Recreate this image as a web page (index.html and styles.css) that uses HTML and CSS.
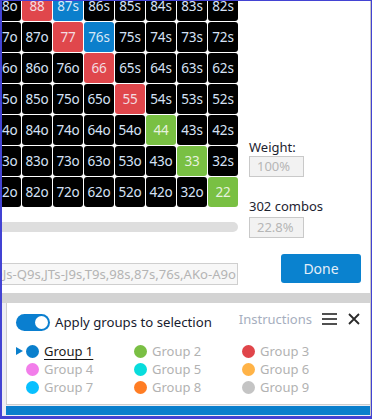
FILE: index.html
```html
<!DOCTYPE html>
<html>
<head>
<meta charset="utf-8">
<link rel="stylesheet" href="styles.css">
</head>
<body>
<div class="window">
  <div class="frame">
    <div class="top">
      <div class="left">
        <div class="grid-view">
          <div class="grid">
            <div class="cell">98o</div><div class="cell red">88</div><div class="cell blue">87s</div><div class="cell">86s</div><div class="cell">85s</div><div class="cell">84s</div><div class="cell">83s</div><div class="cell">82s</div>
            <div class="cell">97o</div><div class="cell">87o</div><div class="cell red">77</div><div class="cell blue">76s</div><div class="cell">75s</div><div class="cell">74s</div><div class="cell">73s</div><div class="cell">72s</div>
            <div class="cell">96o</div><div class="cell">86o</div><div class="cell">76o</div><div class="cell red">66</div><div class="cell">65s</div><div class="cell">64s</div><div class="cell">63s</div><div class="cell">62s</div>
            <div class="cell">95o</div><div class="cell">85o</div><div class="cell">75o</div><div class="cell">65o</div><div class="cell red">55</div><div class="cell">54s</div><div class="cell">53s</div><div class="cell">52s</div>
            <div class="cell">94o</div><div class="cell">84o</div><div class="cell">74o</div><div class="cell">64o</div><div class="cell">54o</div><div class="cell green">44</div><div class="cell">43s</div><div class="cell">42s</div>
            <div class="cell">93o</div><div class="cell">83o</div><div class="cell">73o</div><div class="cell">63o</div><div class="cell">53o</div><div class="cell">43o</div><div class="cell green">33</div><div class="cell">32s</div>
            <div class="cell">92o</div><div class="cell">82o</div><div class="cell">72o</div><div class="cell">62o</div><div class="cell">52o</div><div class="cell">42o</div><div class="cell">32o</div><div class="cell green">22</div>
          </div>
        </div>
        <div class="scroll-track"></div>
        <div class="range-input"><span>AA-22,AKs-A9s,KQs-K9s,QJs-Q9s,JTs-J9s,T9s,98s,87s,76s,AKo-A9o</span></div>
      </div>
      <div class="right">
        <div class="label">Weight:</div>
        <div class="box">100%</div>
        <div class="label combos">302 combos</div>
        <div class="box">22.8%</div>
        <button class="done">Done</button>
      </div>
    </div>
    <div class="divider"></div>
    <div class="bottom">
      <div class="panel">
        <div class="panel-head">
          <div class="apply">
            <span class="toggle"><span class="knob"></span></span>
            <span class="apply-text">Apply groups to selection</span>
          </div>
          <div class="tools">
            <span class="instructions">Instructions</span>
            <svg class="menu-icon" width="15" height="14" viewBox="0 0 15 14"><rect x="0" y="1" width="15" height="2" fill="#505050"/><rect x="0" y="6" width="15" height="2" fill="#505050"/><rect x="0" y="11" width="15" height="2" fill="#505050"/></svg>
            <svg class="close-icon" width="12" height="12" viewBox="0 0 12 12"><path d="M1 1 L11 11 M11 1 L1 11" stroke="#2a2a2a" stroke-width="1.8" fill="none"/></svg>
          </div>
        </div>
        <div class="groups">
          <div class="group active"><span class="marker"></span><span class="dot" style="background:#0a7fcc"></span><span class="gname">Group 1</span></div>
          <div class="group"><span class="marker"></span><span class="dot" style="background:#7abf44"></span><span class="gname">Group 2</span></div>
          <div class="group"><span class="marker"></span><span class="dot" style="background:#e0454a"></span><span class="gname">Group 3</span></div>
          <div class="group"><span class="marker"></span><span class="dot" style="background:#f27eea"></span><span class="gname">Group 4</span></div>
          <div class="group"><span class="marker"></span><span class="dot" style="background:#08dcdc"></span><span class="gname">Group 5</span></div>
          <div class="group"><span class="marker"></span><span class="dot" style="background:#ffb347"></span><span class="gname">Group 6</span></div>
          <div class="group"><span class="marker"></span><span class="dot" style="background:#08c0ff"></span><span class="gname">Group 7</span></div>
          <div class="group"><span class="marker"></span><span class="dot" style="background:#ff7d24"></span><span class="gname">Group 8</span></div>
          <div class="group"><span class="marker"></span><span class="dot" style="background:#c4c4c4"></span><span class="gname">Group 9</span></div>
        </div>
      </div>
      <div class="bluebar"></div>
    </div>
  </div>
</div>
</body>
</html>
```

FILE: styles.css
```css
* { box-sizing: border-box; }
html, body { margin: 0; padding: 0; background: #fff; }
body { font-family: "Noto Sans", "Open Sans", sans-serif; }

.window {
  width: 372px;
  height: 419px;
  border-style: solid;
  border-color: #4343d3;
  border-width: 1px 1px 3px 2px;
  overflow: hidden;
}
.frame {
  height: 100%;
  border-right: 1px solid #c6c6c6;
  display: flex;
  flex-direction: column;
}

.top {
  height: 292px;
  display: flex;
}
.left {
  width: 236px;
  display: flex;
  flex-direction: column;
}
.grid-view {
  height: 206px;
  overflow: hidden;
}
.grid {
  margin: -10px 0 0 -11px;
  display: grid;
  grid-template-columns: repeat(8, 30px);
  grid-auto-rows: 30px;
  gap: 1px;
}
.cell {
  background: #000;
  border-radius: 3px;
  color: #d6e2f6;
  font-size: 13.5px;
  display: flex;
  align-items: center;
  justify-content: center;
  letter-spacing: -0.2px;
}
.cell.red { background: #e0474c; color: #f4dde0; }
.cell.blue { background: #0b7fcc; color: #d8e8f6; }
.cell.green { background: #79c043; color: #e6f2de; }

.scroll-track {
  margin-top: 15px;
  height: 10px;
  background: #dedede;
  border-radius: 0 5px 5px 0;
}
.range-input {
  margin-top: 31px;
  height: 22px;
  border: 1px solid #cfcfcf;
  border-left: none;
  background: #f7f7f7;
  display: flex;
  justify-content: flex-end;
  align-items: center;
  overflow: hidden;
  white-space: nowrap;
  padding-right: 1px;
  color: #b4b4b4;
  font-size: 13.1px;
}

.right {
  flex: 1;
  display: flex;
  flex-direction: column;
  align-items: flex-start;
  padding: 138px 9px 0 11px;
}
.label {
  font-size: 13px;
  line-height: 17px;
  height: 17px;
  color: #1d2330;
}
.label.combos { margin-top: 21px; }
.box {
  width: 55px;
  height: 21px;
  border: 1px solid #c9c9c9;
  background: #f2f2f2;
  color: #b6b6b6;
  font-size: 13px;
  line-height: 19px;
  padding-left: 7px;
}
.label.combos + .box { margin-top: 2px; }
.done {
  margin-top: 16px;
  align-self: flex-end;
  width: 80px;
  height: 29px;
  border: none;
  border-radius: 3px;
  background: #0a82cf;
  color: #e4eef8;
  font-family: "Noto Sans", "Open Sans", sans-serif;
  font-size: 14px;
  padding: 0;
}

.divider {
  height: 10px;
  background: #d3d3d3;
}
.bottom {
  flex: 1;
  background: #ededf3;
  display: flex;
  flex-direction: column;
}
.panel {
  margin-left: 4px;
  height: 102px;
  background: #fff;
  border-left: 1px solid #cdcdcd;
  border-bottom: 1px solid #cdcdcd;
  padding: 8px 10px 0 9px;
}
.panel-head {
  display: flex;
  justify-content: space-between;
  align-items: flex-start;
}
.apply {
  display: flex;
  align-items: center;
  margin-top: 3px;
  gap: 5px;
}
.toggle {
  width: 34px;
  height: 17px;
  border-radius: 9px;
  background: #0a7fd0;
  display: flex;
  align-items: center;
  justify-content: flex-end;
  padding-right: 2px;
}
.knob {
  width: 13px;
  height: 13px;
  border-radius: 50%;
  background: #fff;
}
.apply-text {
  font-size: 13.2px;
  color: #18202e;
  line-height: 17px;
}
.tools {
  display: flex;
  align-items: center;
  height: 18px;
  margin-top: -1px;
}
.instructions {
  font-size: 13px;
  color: #a6aebe;
  line-height: 18px;
}
.menu-icon { margin-left: 10px; }
.close-icon { margin-left: 11px; }

.groups {
  margin-top: 11px;
  display: grid;
  grid-template-columns: 108px 108px 108px;
  grid-auto-rows: 18px;
}
.group {
  display: flex;
  align-items: center;
}
.marker {
  width: 10px;
  height: 9px;
  flex: none;
}
.group.active .marker {
  width: 0;
  height: 0;
  border-top: 4.5px solid transparent;
  border-bottom: 4.5px solid transparent;
  border-left: 7px solid #0a7fcc;
  margin-right: 3px;
}
.dot {
  width: 13px;
  height: 13px;
  border-radius: 50%;
  flex: none;
}
.gname {
  margin-left: 5px;
  font-size: 13px;
  color: #b2b2b2;
  line-height: 18px;
}
.group.active .gname {
  color: #1a1a1a;
  text-decoration: underline;
  text-underline-offset: 3px;
}
.bluebar {
  margin: 1px 0 0 4px;
  height: 9px;
  background: #0a7fcc;
}
```
